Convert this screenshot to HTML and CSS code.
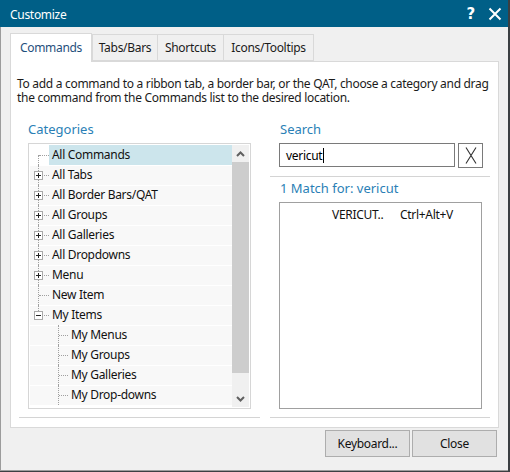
FILE: index.html
```html
<!DOCTYPE html>
<html lang="en">
  <head>
    <meta charset="UTF-8" />
    <title>Customize</title>
    <link rel="stylesheet" href="styles.css">
  </head>
  <body>
    <div class="window">
      <div class="titlebar">
        <span class="title">Customize</span>
        <span class="help">?</span>
        <svg class="close-x" width="14" height="14" viewBox="0 0 14 14">
          <path d="M1.5 1.5 L12.5 12.5 M12.5 1.5 L1.5 12.5" stroke="#fff" stroke-width="2" fill="none" />
        </svg>
      </div>

      <div class="frame">
        <div class="tabs">
          <div class="tab active">Commands</div>
          <div class="tab">Tabs/Bars</div>
          <div class="tab">Shortcuts</div>
          <div class="tab">Icons/Tooltips</div>
        </div>

        <div class="panel">
          <p class="intro">To add a command to a ribbon tab, a border bar, or the QAT, choose a category and drag the command from the Commands list to the desired location.</p>

          <div class="cols">
            <div class="col left">
              <div class="heading">Categories</div>
              <div class="tree">
                <div class="rows">
                  <div class="node first selected"><span class="twig"></span><span class="label">All Commands</span></div>
                  <div class="node"><span class="twig"><i class="box plus"></i></span><span class="label">All Tabs</span></div>
                  <div class="node"><span class="twig"><i class="box plus"></i></span><span class="label">All Border Bars/QAT</span></div>
                  <div class="node"><span class="twig"><i class="box plus"></i></span><span class="label">All Groups</span></div>
                  <div class="node"><span class="twig"><i class="box plus"></i></span><span class="label">All Galleries</span></div>
                  <div class="node"><span class="twig"><i class="box plus"></i></span><span class="label">All Dropdowns</span></div>
                  <div class="node"><span class="twig"><i class="box plus"></i></span><span class="label">Menu</span></div>
                  <div class="node"><span class="twig"></span><span class="label">New Item</span></div>
                  <div class="node last"><span class="twig"><i class="box minus"></i></span><span class="label">My Items</span></div>
                  <div class="node child"><span class="twig"></span><span class="label">My Menus</span></div>
                  <div class="node child"><span class="twig"></span><span class="label">My Groups</span></div>
                  <div class="node child"><span class="twig"></span><span class="label">My Galleries</span></div>
                  <div class="node child"><span class="twig"></span><span class="label">My Drop-downs</span></div>
                </div>
                <div class="scroll">
                  <div class="arrow">
                    <svg width="9" height="6" viewBox="0 0 9 6"><path d="M1 5 L4.5 1.5 L8 5" stroke="#606060" stroke-width="2" fill="none" /></svg>
                  </div>
                  <div class="thumb"></div>
                  <div class="track"></div>
                  <div class="arrow">
                    <svg width="9" height="6" viewBox="0 0 9 6"><path d="M1 1 L4.5 4.5 L8 1" stroke="#606060" stroke-width="2" fill="none" /></svg>
                  </div>
                </div>
              </div>
              <div class="sep"></div>
            </div>

            <div class="col right">
              <div class="heading">Search</div>
              <div class="search">
                <div class="input">vericut<span class="caret"></span></div>
                <div class="clear">
                  <svg width="12" height="17" viewBox="0 0 12 17"><path d="M1 0.5 L11 16.5 M11 0.5 L1 16.5" stroke="#303030" stroke-width="1.1" fill="none" /></svg>
                </div>
              </div>
              <div class="sep short"></div>
              <div class="heading match">1 Match for: vericut</div>
              <div class="results">
                <div class="result"><span class="cmd">VERICUT..</span><span class="keys">Ctrl+Alt+V</span></div>
              </div>
              <div class="sep"></div>
            </div>
          </div>
        </div>

        <div class="buttons">
          <button class="btn">Keyboard...</button>
          <button class="btn">Close</button>
        </div>
      </div>
    </div>
  </body>
</html>
```

FILE: styles.css
```css
html {
  background: #3b3f42;
}
body {
  margin: 0;
  font-family: "Noto Sans", sans-serif;
  font-size: 12px;
  letter-spacing: -0.3px;
  color: #1b1b1b;
}
.window {
  width: 508px;
  height: 471px;
  display: flex;
  flex-direction: column;
}
.titlebar {
  height: 27px;
  background: #005f87;
  color: #fff;
  display: flex;
  align-items: center;
  padding-left: 10px;
}
.title {
  flex: 1;
  font-size: 12px;
  padding-top: 1px;
}
.help {
  font-family: "DejaVu Sans", sans-serif;
  font-weight: bold;
  font-size: 15px;
  margin-right: 13px;
}
.close-x {
  margin-right: 6px;
}
.frame {
  flex: 1;
  background: #f0f0f0;
  border-left: 1px solid #9c9c9c;
  border-bottom: 1px solid #9c9c9c;
  display: flex;
  flex-direction: column;
}
.tabs {
  display: flex;
  align-items: flex-end;
  height: 29px;
  margin-top: 5px;
  padding-left: 9px;
}
.tab {
  box-sizing: border-box;
  height: 27px;
  line-height: 26px;
  background: #f0f0f0;
  border: 1px solid #d9d9d9;
  margin-right: -1px;
  text-align: center;
  position: relative;
}
.tab.active {
  height: 29px;
  line-height: 28px;
  width: 82px;
  background: #fff;
  border-bottom: 0;
  color: #1f4f7c;
  z-index: 2;
  margin-right: 0;
  margin-bottom: -1px;
}
.tab:nth-child(2) { width: 66px; }
.tab:nth-child(3) { width: 67px; }
.tab:nth-child(4) { width: 91px; }
.panel {
  box-sizing: border-box;
  width: 489px;
  height: 367px;
  margin-left: 9px;
  background: #fff;
  border: 1px solid #d9d9d9;
  position: relative;
  z-index: 1;
}
.intro {
  margin: 0;
  padding: 15px 6px 0;
  line-height: 14px;
}
.cols {
  display: flex;
  gap: 10px;
  padding-left: 8px;
  margin-top: 15px;
}
.col {
  display: flex;
  flex-direction: column;
}
.col.left {
  width: 241px;
}
.col.right {
  width: 220px;
}
.heading {
  font-size: 13px;
  letter-spacing: 0;
  line-height: 18px;
  color: #2a7fb6;
  padding-left: 9px;
}
.col.right .heading {
  padding-left: 10px;
}
.tree {
  box-sizing: border-box;
  width: 223px;
  height: 266px;
  margin: 5px 0 0 9px;
  border: 1px solid #d6d6d6;
  padding: 1px;
  display: flex;
}
.rows {
  width: 202px;
  overflow: hidden;
}
.node {
  height: 20px;
  display: flex;
  background: #f8f8f8;
  box-shadow: inset 0 1px 0 #fff;
}
.node.first {
  background: #fff;
}
.twig {
  width: 19px;
  flex: none;
  position: relative;
}
.twig::before {
  content: "";
  position: absolute;
  left: 8px;
  top: 0;
  bottom: 0;
  border-left: 1px dotted #a0a0a0;
}
.twig::after {
  content: "";
  position: absolute;
  left: 9px;
  right: 0;
  top: 10px;
  border-top: 1px dotted #a0a0a0;
}
.node.first .twig::before {
  top: 10px;
}
.node.last .twig::before {
  bottom: 10px;
}
.node.child .twig {
  width: 38px;
}
.node.child .twig::before {
  left: 28px;
}
.node.child .twig::after {
  left: 29px;
}
.box {
  position: absolute;
  left: 4px;
  top: 6px;
  width: 7px;
  height: 7px;
  border: 1px solid #a8a8a8;
  background: #fff;
  z-index: 1;
}
.box.plus {
  background:
    linear-gradient(#222, #222) center / 5px 1px no-repeat,
    linear-gradient(#222, #222) center / 1px 5px no-repeat,
    #fff;
}
.box.minus {
  background: linear-gradient(#222, #222) center / 5px 1px no-repeat, #fff;
}
.label {
  flex: 1;
  padding-left: 3px;
  line-height: 19px;
  color: #111;
  white-space: nowrap;
}
.node.selected .label {
  background: #cce5ec;
}
.scroll {
  width: 17px;
  display: flex;
  flex-direction: column;
  background: #f0f0f0;
}
.arrow {
  height: 17px;
  display: flex;
  align-items: center;
  justify-content: center;
}
.thumb {
  height: 211px;
  background: #cdcdcd;
}
.track {
  flex: 1;
}
.sep {
  height: 1px;
  background: #d4d4d4;
  margin-top: 8px;
}
.search {
  display: flex;
  gap: 3px;
  margin: 5px 0 0 9px;
}
.input {
  box-sizing: border-box;
  width: 176px;
  height: 24px;
  border: 1px solid #7a7a7a;
  padding-left: 6px;
  color: #000;
  display: flex;
  align-items: center;
}
.caret {
  width: 1px;
  height: 15px;
  background: #000;
  margin-left: 1px;
}
.clear {
  box-sizing: border-box;
  width: 25px;
  height: 25px;
  border: 1px solid #7a7a7a;
  display: flex;
  align-items: center;
  justify-content: center;
}
.heading.match {
  margin-top: 2px;
}
.results {
  box-sizing: border-box;
  width: 203px;
  height: 207px;
  margin: 5px 0 0 9px;
  border: 1px solid #a0a0a0;
}
.result {
  display: flex;
  padding-top: 4px;
  line-height: 16px;
  color: #111;
}
.cmd {
  margin-left: 52px;
  width: 68px;
}
.buttons {
  display: flex;
  justify-content: flex-end;
  gap: 2px;
  margin-top: 2px;
  padding-right: 11px;
}
.btn {
  box-sizing: border-box;
  width: 85px;
  height: 27px;
  background: #e1e1e1;
  border: 1px solid #adadad;
  font-family: "Noto Sans", sans-serif;
  font-size: 12px;
  letter-spacing: -0.3px;
  color: #111;
  padding: 0;
}
```
